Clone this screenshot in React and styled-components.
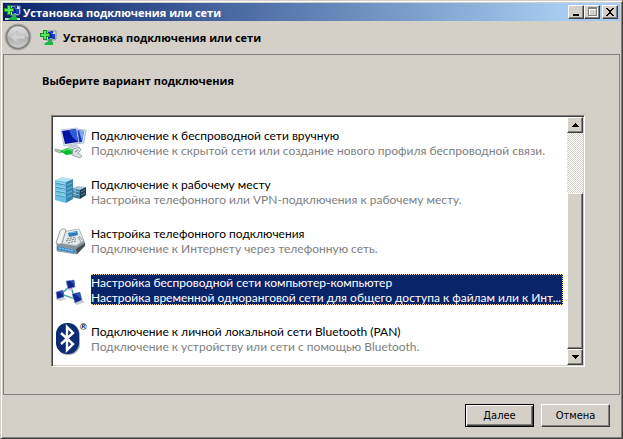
import React, { useState } from 'react';
import styled, { createGlobalStyle, css } from 'styled-components';

const face = '#d4d0c8';
const shadow = '#808080';
const dark = '#404040';
const navy = '#0a246a';

const GlobalStyle = createGlobalStyle`
  * { box-sizing: border-box; }
  body {
    margin: 0;
    background: ${face};
    color: #000;
    font-family: Lato, 'Noto Sans', sans-serif;
    font-size: 12px;
    line-height: 15px;
  }
  button, input { font: inherit; color: inherit; margin: 0; padding: 0; }
`;

const raised = css`
  border: 1px solid;
  border-color: #fff ${dark} ${dark} #fff;
  box-shadow: inset -1px -1px 0 ${shadow};
  background: ${face};
`;

const Window = styled.main`
  display: flex;
  flex-direction: column;
  min-height: 100vh;
  padding: 1px;
  border: 1px solid;
  border-color: ${face} ${dark} ${dark} ${face};
  box-shadow: inset 1px 1px 0 #fff, inset -1px -1px 0 ${shadow};
`;

const TitleBar = styled.header`
  display: flex;
  align-items: center;
  height: 18px;
  margin: 1px 1px 0;
  padding: 0 2px 0 1px;
  background: linear-gradient(to right, ${navy}, #a6caf0 90%);
  color: #fff;
`;

const Bold = styled.span`
  font-family: 'Open Sans', 'Noto Sans', sans-serif;
  font-size: 11px;
  font-weight: bold;
  white-space: nowrap;
`;

const Caption = styled(Bold)`
  flex: 1;
  padding-left: 2px;
`;

const CaptionButton = styled.button`
  ${raised}
  display: grid;
  place-items: center;
  width: 16px;
  height: 14px;
  margin-left: ${(p) => (p.$apart ? '2px' : '0')};
`;

const Heading = styled.div`
  display: flex;
  align-items: center;
  height: 33px;
  padding-left: 2px;
`;

const BackButton = styled.button`
  display: block;
  width: 28px;
  height: 28px;
  margin-right: 8px;
  margin-bottom: 2px;
  border: 0;
  background: none;
  svg { display: block; }
`;

const HeadingText = styled(Bold).attrs({ as: 'h1' })`
  margin: 0 0 0 6px;
`;

const Content = styled.section`
  flex: 1;
  margin: 0 1px;
  padding: 18px 34px 26px 38px;
  border: 1px solid ${shadow};
`;

const Question = styled(Bold).attrs({ as: 'h2' })`
  margin: 0 0 27px;
`;

const ListBox = styled.div`
  display: flex;
  margin-left: 9px;
  border: 1px solid;
  border-color: ${shadow} #fff #fff ${shadow};
  background: #fff;
  box-shadow: inset 1px 1px 0 ${dark}, inset -1px -1px 0 ${face};
  padding: 1px;
`;

const Options = styled.div`
  display: flex;
  flex-direction: column;
  flex: 1;
  gap: 18px;
  min-width: 0;
  padding: 10px 4px 11px 2px;
`;

const Option = styled.label`
  display: flex;
  height: 31px;
`;

const OptionInput = styled.input`
  appearance: none;
  width: 0;
  height: 0;
  outline: none;
`;

const OptionIcon = styled.span`
  display: flex;
  flex: none;
  width: 36px;
  svg { flex: none; overflow: visible; }
`;

const Registered = styled.span`
  font: bold 9px/8px 'Liberation Sans', sans-serif;
`;

const OptionText = styled.span`
  flex: 1;
  min-width: 0;
  white-space: nowrap;
  border: 1px dotted ${(p) => (p.$selected ? '#f5db95' : 'transparent')};
  border-left-width: 0;
  background: ${(p) => (p.$selected ? navy : 'transparent')};
  color: ${(p) => (p.$selected ? '#fff' : '#000')};
`;

const Description = styled.span`
  display: block;
  color: ${(p) => (p.$selected ? '#fff' : shadow)};
`;

const ScrollBar = styled.div`
  display: flex;
  flex-direction: column;
  width: 16px;
  background: repeating-conic-gradient(#fff 0 25%, ${face} 0 50%) 0 0 / 2px 2px;
`;

const ScrollButton = styled.button`
  ${raised}
  display: grid;
  place-items: center;
  height: 16px;
`;

const ScrollTrack = styled.div`
  flex: 1;
  display: flex;
  flex-direction: column;
  justify-content: flex-end;
`;

const ScrollThumb = styled.div`
  ${raised}
  height: 72%;
`;

const Footer = styled.footer`
  display: flex;
  justify-content: flex-end;
  gap: 7px;
  padding: 9px 11px 10px;
`;

const PushButton = styled.button`
  ${raised}
  width: 69px;
  height: 23px;
  font-family: 'DejaVu Sans Condensed', 'DejaVu Sans', sans-serif;
  font-stretch: condensed;
  font-size: 11px;
  ${(p) => p.$primary && css`
    border-color: #000;
    box-shadow: inset 1px 1px 0 #fff, inset -1px -1px 0 ${dark}, inset -2px -2px 0 ${shadow};
  `}
`;

const NetworkIcon = () => (
  <svg width="17" height="17" viewBox="0 0 17 17" aria-hidden="true">
    <path d="M7 2h9v8l-2 1H6z" fill="#d9e2ec" stroke="#7d8996" />
    <path d="M8 3l5-1v7l-5 1z" fill="#071e9b" />
    <path d="M10 3l3 1v3z" fill="#517ff0" />
    <path d="M12 5h3v5h-3z" fill="#1741b8" />
    <path d="M8 10h4v4H8z" fill="#43a765" />
    <path d="M1 14h15v2H1z" fill="#c9d1d2" />
    <path d="M4 15l3-2h6v3H5z" fill="#12ba43" />
    <path d="M3 1h4v3h3v4H7v3H3V8H0V4h3z" fill="#149127" />
    <path d="M4 2h2v3h3v2H6v3H4V7H1V5h3z" fill="#5bea55" />
  </svg>
);

const BackIcon = () => (
  <svg width="28" height="28" viewBox="0 0 28 28" aria-hidden="true">
    <defs>
      <linearGradient id="back" x2="0" y2="1">
        <stop offset="0" stopColor="#e2e2e2" />
        <stop offset=".48" stopColor="#c3c3c3" />
        <stop offset=".52" stopColor="#adadad" />
        <stop offset="1" stopColor="#d0d0d0" />
      </linearGradient>
    </defs>
    <circle cx="14" cy="14" r="13" fill="#b9b9b9" stroke="#a5a5a2" />
    <circle cx="14" cy="14" r="11.5" fill="url(#back)" stroke="#7f7f7f" strokeWidth="1.5" />
    <path d="M6 14l7-6v4h8v4h-8v4z" fill="#d2d2d2" stroke="#bcbcbc" />
  </svg>
);

const WirelessIcon = () => (
  <svg width="32" height="32" viewBox="0 0 32 32" aria-hidden="true">
    <path d="M19 2l12 1-2 13-9 1z" fill="#dce6f0" stroke="#9aabbd" strokeWidth=".7" />
    <path d="M20 3l9 1-2 11-7 1z" fill="#1636c2" />
    <path d="M24 4l5 0-2 10z" fill="#7da7ef" />
    <path d="M6 3l16-2 2 15-15 3z" fill="#dfe7f1" stroke="#a7b3c4" strokeWidth=".7" />
    <path d="M7 4l14-2 2 13-13 2z" fill="#0612a4" />
    <path d="M14 3l7-1 2 12c-4-1-7-5-9-11z" fill="#3159dc" />
    <path d="M12 19l9-2 3 2-9 3z" fill="#c4cbd3" />
    <path d="M0 22l5 1 3 2-3 1-5-2z" fill="#b3c9b4" stroke="#6f9273" strokeWidth=".6" />
    <path d="M5 24l7-3 8 2-2 4-7 1z" fill="#0bbb31" />
    <path d="M8 24l5-2 5 2" fill="none" stroke="#75ee80" />
    <path d="M18 22l6-2 2 3-3 3 4 3-2 2-8-3z" fill="#dce0e0" stroke="#8c9699" strokeWidth=".8" />
    <path d="M20 25l3-2" stroke="#6e8792" />
  </svg>
);

const WorkplaceIcon = () => (
  <svg width="32" height="32" viewBox="0 0 32 32" aria-hidden="true">
    <path d="M0 4l7-3 11 2-7 3z" fill="#b5e2f3" />
    <path d="M0 4l11 2v21L0 24z" fill="#6dbde5" />
    <path d="M11 6l7-3v20l-7 4z" fill="#3a88b0" />
    <path d="M1 7l9 2M1 11l9 2M1 15l9 2M1 19l9 2" stroke="#3f8fbc" />
    <path d="M1 6l9 2M1 10l9 2M1 14l9 2M1 18l9 2" stroke="#aee4f8" strokeWidth=".8" />
    <path d="M12 9l5-2M12 13l5-2M12 17l5-2M12 21l5-2" stroke="#6bb5d8" />
    <path d="M8 9v1M8 13v1M8 17v1" stroke="#b5f0aa" />
    <path d="M17 12l6-2 8 1-6 3z" fill="#a6c7d7" />
    <path d="M17 12l8 2v9l-8-2z" fill="#427b9b" />
    <path d="M25 14l6-3v8l-6 4z" fill="#173d55" />
    <path d="M18 14l6 2m-6 1l6 2m-4-6v7" stroke="#80c4de" />
    <path d="M26 16l4-2m-4 5l4-2" stroke="#678a9d" />
  </svg>
);

const PhoneIcon = () => (
  <svg width="32" height="32" viewBox="0 0 32 32" aria-hidden="true">
    <path d="M2 18L8 7l16-3 6 15-8 10-20-3z" fill="#c1c8cb" stroke="#828c91" strokeWidth=".8" />
    <path d="M2 18l19 3 8-5 1 4-8 9-20-4z" fill="#8a9498" />
    <path d="M10 7l14-3 4 11-7 5-13-2z" fill="#e3e8e9" />
    <path d="M13 8l9-2 1 4-9 2z" fill="#2579bd" />
    <path d="M14 8l7-1" stroke="#78bee9" />
    <path d="M5 6c1-2 4-3 6-1L7 18c-2 2-5 1-6 0z" fill="#f3f5f5" stroke="#7e888c" strokeWidth=".8" />
    <path d="M12 14l9-2m-10 4l10-2m-8 4l8-2" stroke="#717e84" strokeDasharray="2 1" />
    <path d="M24 11l3 4m-4-3l3 5" stroke="#929da1" />
    <path d="M2 21l18 4v3L2 25z" fill="#3c92c7" />
    <path d="M4 23l15 3" stroke="#9ed4ed" strokeDasharray="2 1" />
    <path d="M21 24l9-6v3l-8 8z" fill="#454e52" />
  </svg>
);

const AdhocIcon = () => (
  <svg width="32" height="32" viewBox="0 0 32 32" aria-hidden="true">
    <path d="M14 13L6 20l14 5-4-12" fill="none" stroke="#309a9a" strokeWidth="1.3" />
    <path d="M12 14l7 1-4 2zM0 25l7-2 5 2-7 2zM18 28l9-2 3 2-8 3z" fill="#cbd0d5" />
    <path d="M11 7l8-1 1 7-7 2z" fill="#10258d" stroke="#8ba4d4" strokeWidth=".6" />
    <path d="M1 18l7-2 1 7-7 2z" fill="#10258d" stroke="#8ba4d4" strokeWidth=".6" />
    <path d="M17 20l8-2 2 8-7 3z" fill="#10258d" stroke="#8ba4d4" strokeWidth=".6" />
    <path d="M15 7l4-1 1 5zM4 18l4-1 1 4zM20 20l5-1 1 6z" fill="#2a58bf" />
  </svg>
);

const BluetoothIcon = () => (
  <svg width="25" height="32" viewBox="0 0 25 32" aria-hidden="true">
    <rect x="2" y="1" width="23" height="31" rx="11" fill="#a7acb8" />
    <rect x="1" y="0" width="23" height="31" rx="11" fill="#0b2c72" />
    <path d="M6 10l12 11-6 6V4l6 6L6 21" fill="none" stroke="#fff" strokeWidth="2.4" />
  </svg>
);

const options = [
  {
    icon: <WirelessIcon />,
    title: 'Подключение к беспроводной сети вручную',
    text: 'Подключение к скрытой сети или создание нового профиля беспроводной связи.',
  },
  {
    icon: <WorkplaceIcon />,
    title: 'Подключение к рабочему месту',
    text: 'Настройка телефонного или VPN-подключения к рабочему месту.',
  },
  {
    icon: <PhoneIcon />,
    title: 'Настройка телефонного подключения',
    text: 'Подключение к Интернету через телефонную сеть.',
  },
  {
    icon: <AdhocIcon />,
    title: 'Настройка беспроводной сети компьютер-компьютер',
    text: 'Настройка временной одноранговой сети для общего доступа к файлам или к Инт...',
  },
  {
    icon: <><BluetoothIcon /><Registered>®</Registered></>,
    title: 'Подключение к личной локальной сети Bluetooth (PAN)',
    text: 'Подключение к устройству или сети с помощью Bluetooth.',
  },
];

const App = () => {
  const [selected, setSelected] = useState(3);

  return (
    <>
      <GlobalStyle />
      <Window>
        <TitleBar>
          <NetworkIcon />
          <Caption>Установка подключения или сети</Caption>
          <CaptionButton aria-label="Свернуть">
            <svg width="12" height="10" shapeRendering="crispEdges"><path d="M3 7h6v2H3z" /></svg>
          </CaptionButton>
          <CaptionButton aria-label="Развернуть" disabled>
            <svg width="12" height="10" shapeRendering="crispEdges">
              <path d="M3 1h9v9H3z" fill="#fff" />
              <path d="M2 0h9v9H2z" fill={shadow} />
              <path d="M3 2h7v6H3z" fill="#fff" />
              <path d="M4 3h6v5H4z" fill={face} />
            </svg>
          </CaptionButton>
          <CaptionButton aria-label="Закрыть" $apart>
            <svg width="12" height="10" shapeRendering="crispEdges">
              <path d="M2 1h2v1h1v1h2V2h1V1h2v1H9v1H8v1H7v2h1v1h1v1h1v1H8V8H7V7H5v1H4v1H2V8h1V7h1V6h1V4H4V3H3V2H2z" />
            </svg>
          </CaptionButton>
        </TitleBar>
        <Heading>
          <BackButton aria-label="Назад" disabled><BackIcon /></BackButton>
          <NetworkIcon />
          <HeadingText>Установка подключения или сети</HeadingText>
        </Heading>
        <Content>
          <Question>Выберите вариант подключения</Question>
          <ListBox>
            <Options role="radiogroup" aria-label="Выберите вариант подключения">
              {options.map((option, i) => (
                <Option key={option.title}>
                  <OptionInput
                    type="radio"
                    name="connection"
                    checked={selected === i}
                    onChange={() => setSelected(i)}
                  />
                  <OptionIcon>{option.icon}</OptionIcon>
                  <OptionText $selected={selected === i}>
                    {option.title}
                    <Description $selected={selected === i}>{option.text}</Description>
                  </OptionText>
                </Option>
              ))}
            </Options>
            <ScrollBar>
              <ScrollButton aria-label="Вверх">
                <svg width="7" height="4" shapeRendering="crispEdges"><path d="M3 0h1v1h1v1h1v1h1v1H0V3h1V2h1V1h1z" /></svg>
              </ScrollButton>
              <ScrollTrack><ScrollThumb /></ScrollTrack>
              <ScrollButton aria-label="Вниз">
                <svg width="7" height="4" shapeRendering="crispEdges"><path d="M0 0h7v1H6v1H5v1H4v1H3V3H2V2H1V1H0z" /></svg>
              </ScrollButton>
            </ScrollBar>
          </ListBox>
        </Content>
        <Footer>
          <PushButton $primary><u>Д</u>алее</PushButton>
          <PushButton>Отмена</PushButton>
        </Footer>
      </Window>
    </>
  );
};

export default App;
